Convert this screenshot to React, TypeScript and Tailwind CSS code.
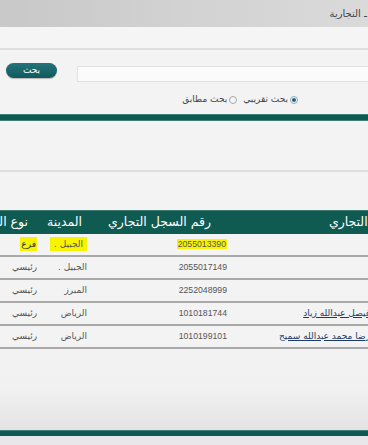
import React from 'react';

const rows = [
  { name: '', number: '2055013390', city: 'الجبيل .', type: 'فرع', hl: true },
  { name: '', number: '2055017149', city: 'الجبيل .', type: 'رئيسي', hl: false },
  { name: '', number: '2252048999', city: 'المبرز', type: 'رئيسي', hl: false },
  { name: 'فيصل عبدالله زياد', number: '1010181744', city: 'الرياض', type: 'رئيسي', hl: false },
  { name: 'رضا محمد عبدالله سميح', number: '1010199101', city: 'الرياض', type: 'رئيسي', hl: false },
];

export default function App() {
  return (
    <div className="w-[368px] h-[445px] overflow-hidden bg-[#f3f3f3] font-['DejaVu_Sans',sans-serif] flex flex-col" dir="rtl">
      {/* Top band */}
      <div className="h-[27px] shrink-0 bg-gradient-to-l from-[#dadada] via-[#d2d2d2] to-[#c8c8c8] flex items-center pr-[1px]">
        <span className="text-[10px] text-[#444] whitespace-nowrap">ـ التجارية</span>
      </div>
      <div className="h-[23px] shrink-0 bg-[#f5f5f5] border-b-2 border-[#dedede]" />

      {/* Search area */}
      <div className="h-[64px] shrink-0 flex flex-col">
        <div className="flex items-start mt-[13px]">
          <div className="w-[293px] h-[16px] mt-[3px] bg-[#fbfbfb] border border-[#e2e2e2] -mr-[2px]" />
          <div className="w-[20px]" />
          <button className="w-[51px] h-[15px] rounded-full bg-gradient-to-b from-[#237479] to-[#115a5e] text-white text-[9px] tracking-[2px] leading-none flex items-center justify-center shadow-[0_1px_1px_rgba(0,0,0,0.25)]">
            بحث
          </button>
        </div>
        <div className="flex items-center mt-[11px] mr-[70px] text-[9px] text-[#444] gap-[6px]">
          <span className="flex items-center gap-[2px]">
            <span className="w-[8px] h-[8px] rounded-full border border-[#8aa] bg-white flex items-center justify-center">
              <span className="w-[4px] h-[4px] rounded-full bg-[#1d5f8f]" />
            </span>
            بحث تقريبي
          </span>
          <span className="flex items-center gap-[2px]">
            <span className="w-[8px] h-[8px] rounded-full border border-[#aaa] bg-[#f4f4f4]" />
            بحث مطابق
          </span>
        </div>
      </div>

      {/* Teal bar */}
      <div className="h-[7px] shrink-0 bg-[#0d5b52] border-y border-[#3f7f77]" />
      <div className="h-[51px] shrink-0 bg-[#f3f3f3] border-b-2 border-[#dedede]" />
      <div className="h-[38px] shrink-0" />

      {/* Table, wider than the view on both sides */}
      <div className="shrink-0 -mr-[40px]">
        <div className="h-[24px] bg-[#0f5b52] border-t border-[#3c7a72] text-white text-[12.5px] flex items-center whitespace-nowrap">
          <div className="w-[7px] shrink-0" />
          <div className="w-[190px] shrink-0">الاسم التجاري</div>
          <div className="w-[129px] shrink-0">رقم السجل التجاري</div>
          <div className="w-[54px] shrink-0">المدينة</div>
          <div className="w-[60px] shrink-0">نوع السجل</div>
        </div>
        {rows.map((r) => (
          <div key={r.number} className="h-[23px] border-b-2 border-[#a9a9a9] bg-[#f3f3f3] flex items-center text-[9px] text-[#555] whitespace-nowrap">
            <div className="w-[38px] shrink-0" />
            <div className="w-[143px] shrink-0 overflow-hidden">
              {r.name && <span className="text-[#1b3a66] underline">{r.name}</span>}
            </div>
            <div className="w-[140px] shrink-0 font-['Liberation_Sans',sans-serif] text-[8.7px]">
              <span className={r.hl ? 'bg-[#f8f400] px-[1px]' : ''}>{r.number}</span>
            </div>
            <div className="w-[50px] shrink-0">
              <span className={r.hl ? 'bg-[#f8f400] px-[4px] py-[2px]' : ''}>{r.city}</span>
            </div>
            <div className="w-[60px] shrink-0">
              <span className={r.hl ? 'bg-[#f8f400] px-[1px] py-[2px] text-[#1f2f3f]' : ''}>{r.type}</span>
            </div>
          </div>
        ))}
      </div>

      {/* Bottom */}
      <div className="h-[81px] shrink-0 bg-gradient-to-b from-[#f3f3f3] via-[#f1f1f1] to-[#e3e3e3]" />
      <div className="h-[6px] shrink-0 bg-[#0d5b52] border-t border-[#3f7f77]" />
      <div className="flex-1 bg-[#e8e8e8]" />
    </div>
  );
}
